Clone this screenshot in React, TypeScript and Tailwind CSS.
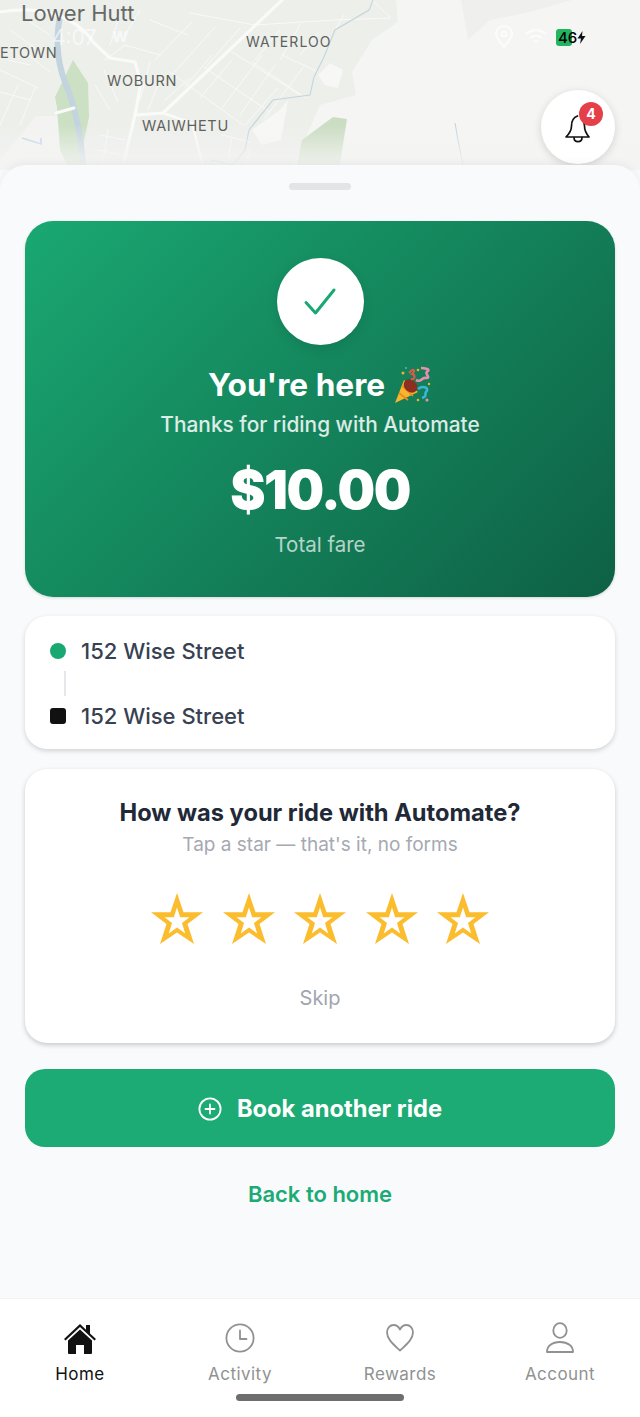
import React from "react";

const Star = () => (
  <svg width="52" height="52" viewBox="0 0 52 52" className="block">
    <path
      fillRule="evenodd"
      fill="#fbbc2d"
      d="M26 0 L32.5 19.3 L52 19.3 L36.5 31 L43 51 L26 39.5 L9 51 L15.5 31 L0 19.3 L19.5 19.3 Z M26 14.5 L22.8 24.3 L13.5 24.3 L21 30 L17.8 40.5 L26 34.5 L34.2 40.5 L31 30 L38.5 24.3 L29.2 24.3 Z"
    />
  </svg>
);

const Popper = () => (
  <svg width="38" height="38" viewBox="0 0 38 38" fill="none" className="shrink-0">
    <path d="M1 37 L10 14 L24 26 Z" fill="#f9b52b" />
    <path d="M5 27 L14 34 M8 20 L19 30" stroke="#ef8a1f" strokeWidth="1.6" />
    <ellipse cx="16.5" cy="20" rx="7.5" ry="6" fill="#8c2f22" transform="rotate(40 16.5 20)" />
    <path d="M22 14 C28 17 27 11 32 12 C38 12 29 7 34 5 C36 3 30 2 27 2" stroke="#e88fb0" strokeWidth="2.6" fill="none" />
    <path d="M24 23 C29 19 36 22 32 26 C30 29 34 30 28 32" stroke="#3bb6d8" strokeWidth="2.6" fill="none" />
    <path d="M15 7 C20 1 22 5 18 8 C22 9 21 14 17 13" stroke="#e4574a" strokeWidth="2" fill="none" />
    <circle cx="9" cy="7" r="1.5" fill="#f1b12c" /><circle cx="24" cy="4" r="1.3" fill="#f1b12c" /><circle cx="12" cy="2" r="1.1" fill="#3bb6d8" />
    <circle cx="33" cy="34" r="1.6" fill="#e88fb0" /><circle cx="24" cy="34" r="1.3" fill="#f1b12c" /><circle cx="35" cy="18" r="1.2" fill="#f1b12c" />
  </svg>
);

const MapArt = () => (
  <svg width="640" height="170" viewBox="0 0 640 170" fill="none" className="block">
    <rect width="640" height="170" fill="#f5f6f4" />
    <path d="M0 0 H396 L398 22 L372 40 L352 72 L356 95 L320 105 L296 160 L290 170 H0 Z" fill="#edefeb" />
    <path d="M461 0 H572 L530 12 L490 20 L468 40 Z" fill="#eff0ee" />
    <path d="M330 63 L343 70 L338 88 L325 85 L318 75 Z" fill="#f7f8f6" />
    <path d="M252 130 L280 110 L288 100 L281 140 L262 145 Z" fill="#f7f8f6" />
    <path d="M36 116 L57 116 L70 170 H0 V160 Z" fill="#f3f4f2" />
    <path d="M333 117 L347 119 L339 170 H296 L302 140 Z" fill="#cbddc3" />
    <path d="M55 97 L73 60 L88 83 L89 117 L80 160 L84 170 H70 L60 150 L57 107 Z" fill="#cce0c4" />
    <path d="M60 16 C56 36 56 60 66 85 C75 105 80 130 84 170" stroke="#c4d4df" strokeWidth="6" />
    <g stroke="#fafaf9" strokeLinecap="round" strokeLinejoin="round">
      <path d="M282 0 L163 113 L135 115 L122 170" strokeWidth="3.2" />
      <path d="M0 12 C40 5 75 15 94 43 L110 58 L135 62 L141 83 L135 115" strokeWidth="3.2" />
      <path d="M163 113 L192 123 L204 170" strokeWidth="2.4" />
      <path d="M56 113 L74 108" strokeWidth="3" />
      <path d="M190 13 L255 25 L335 20 L390 18 M192 22 L155 60 M215 27 L175 72 M240 28 L205 68 M280 30 L255 60 M300 25 L280 60 M318 33 L300 55 M344 15 L335 30 M372 0 L390 17" strokeWidth="0.9" />
      <path d="M170 72 L243 125 M205 68 L270 112 M232 52 L300 95 M252 62 L306 98 M282 55 L318 72 M240 115 L275 65 M222 108 L262 55 M200 98 L232 60 M185 87 L212 55 M265 118 L305 65 M165 100 L190 78 M245 125 L278 88" strokeWidth="0.9" />
      <path d="M125 45 L160 55 M150 20 L188 35 M150 62 L140 100 M160 80 L148 110 M105 60 L125 45 M120 15 L110 45 M140 10 L125 35" strokeWidth="0.9" />
      <path d="M0 70 L38 88 M0 92 L30 100 M35 88 L20 125 M18 85 L0 125 M8 60 L30 65 M28 55 L50 72 M30 22 L50 35 M10 30 L35 48 M104 70 L118 102 M95 85 L110 110" strokeWidth="0.9" />
      <path d="M100 135 L125 140 M98 150 L122 155 M108 130 L102 170 M222 135 L250 142 M232 138 L226 170 M250 150 L244 170" strokeWidth="0.9" />
    </g>
    <path d="M373 0 L369 10 L335 30 L324 57 L314 77 L310 95 L273 100 L249 130 L245 150 L233 165 L212 160 L212 170" stroke="#c3d5db" strokeWidth="1.1" />
    <path d="M455 123 L458 140 L463 165" stroke="#c3d5db" strokeWidth="1.1" />
    <path d="M22 138 L41 144 L41 138" stroke="#bcd4e6" strokeWidth="1.6" />
  </svg>
);

const Bell = () => (
  <svg width="32" height="32" viewBox="0 0 32 32" fill="none" stroke="#111" strokeWidth="1.7" strokeLinecap="round" strokeLinejoin="round">
    <path d="M15.5 4 C10 6 9.5 10 9.5 14 C9.5 19 7 22 4 25 H27 C24.5 22 22.5 19.5 22.5 14 C22.5 12 22 10 21 8.5" />
    <path d="M12 25.5 C12 31 20 31 20 25.5" />
  </svg>
);

const NavItem = ({ label, active, children }: { label: string; active?: boolean; children: React.ReactNode }) => (
  <div className="flex flex-1 flex-col items-center">
    <div className="flex h-[36px] items-center justify-center">{children}</div>
    <span className={`mt-[7px] text-[17px] leading-[22px] tracking-[0.45px] ${active ? "text-[#111]" : "text-[#8f9291]"}`}>{label}</span>
  </div>
);

export default function App() {
  return (
    <div className="relative h-[1417px] w-[640px] overflow-hidden bg-[#f8fafc] font-['Inter',sans-serif]">
      <div className="absolute inset-x-0 top-0 h-[170px]">
        <MapArt />
        <div className="absolute inset-x-0 top-[125px] h-[45px] bg-gradient-to-b from-transparent to-[#f4f4f3]" />
        <span className="absolute left-[21px] top-0 text-[22px] leading-[26px] text-[#666a66]">Lower Hutt</span>
        <span className="absolute left-0 top-[44px] text-[14.5px] leading-[18px] tracking-[0.7px] text-[#5d625d]">ETOWN</span>
        <span className="absolute left-[246px] top-[33px] text-[14px] leading-[18px] tracking-[1.1px] text-[#5d625d]">WATERLOO</span>
        <span className="absolute left-[107px] top-[72px] text-[14.5px] leading-[18px] tracking-[0.7px] text-[#5d625d]">WOBURN</span>
        <span className="absolute left-[142px] top-[117px] text-[14.5px] leading-[18px] tracking-[0.7px] text-[#5d625d]">WAIWHETU</span>
        <span className="absolute left-[52px] top-[25px] text-[21px] leading-[26px] text-white/60">4:07</span>
        <span className="absolute left-[112px] top-[25px] text-[19px] font-bold leading-[22px] text-white/60">w</span>
        <svg className="absolute left-[494px] top-[25px]" width="20" height="24" viewBox="0 0 20 24" fill="none" stroke="#fff" strokeOpacity="0.7" strokeWidth="2">
          <path d="M10 22 C5 16 2 12 2 9 A8 8 0 0 1 18 9 C18 12 15 16 10 22 Z" />
          <circle cx="10" cy="9" r="2.5" />
        </svg>
        <svg className="absolute left-[524px] top-[28px]" width="24" height="18" viewBox="0 0 24 18" fill="none" stroke="#fff" strokeOpacity="0.7" strokeWidth="2">
          <path d="M2 6 C8 1 16 1 22 6 M6 10 C10 7 14 7 18 10 M10 14 C11 13 13 13 14 14" />
        </svg>
        <div className="absolute left-[556px] top-[29px] h-[17px] w-[16px] rounded-[3px] bg-[#22b45e]" />
        <span className="absolute left-[558px] top-[28px] text-[15px] font-medium leading-[19px] text-black">46</span>
        <svg className="absolute left-[577px] top-[31px]" width="9" height="13" viewBox="0 0 9 13"><path d="M5.5 0 L0.5 7.5 H4 L3 13 L8.5 5 H5 Z" fill="#111" /></svg>
        <div className="absolute left-[541px] top-[90px] flex h-[74px] w-[74px] items-center justify-center rounded-full bg-white shadow-[0_2px_8px_rgba(0,0,0,0.14)]">
          <div className="mt-[2px]"><Bell /></div>
          <div className="absolute left-[38px] top-[12px] flex h-[24px] w-[24px] items-center justify-center rounded-full bg-[#e5404a] text-[14px] font-bold leading-none text-white">4</div>
        </div>
      </div>

      <div className="absolute inset-x-0 bottom-0 top-[165px] flex flex-col">
        <main className="flex flex-1 flex-col rounded-t-[26px] bg-[#f8fafc] px-[25px] shadow-[0_-2px_8px_rgba(0,0,0,0.05)]">
          <div className="mx-auto mt-[18px] h-[7px] w-[62px] rounded-full bg-[#e2e5e8]" />
          <section className="mt-[31px] flex h-[376px] flex-col items-center rounded-[28px] bg-[linear-gradient(135deg,#1aa872,#0e6045)] pt-[37px] shadow-[0_1px_3px_rgba(0,0,0,0.15)]">
            <div className="flex h-[87px] w-[87px] items-center justify-center rounded-full bg-white shadow-[0_4px_12px_rgba(0,0,0,0.1)]">
              <svg width="38" height="38" viewBox="0 0 38 38" fill="none" stroke="#1aa872" strokeWidth="3" strokeLinecap="round" strokeLinejoin="round">
                <path d="M5 19.5 L14.5 30 L33 7" />
              </svg>
            </div>
            <div className="mt-[19px] flex h-[42px] items-center gap-[9px] text-[31.6px] font-bold leading-[42px] text-white">
              <span>You're here</span>
              <Popper />
            </div>
            <p className="mt-[4px] text-[20.85px] font-medium leading-[30px] text-white/85">Thanks for riding with Automate</p>
            <p className="mt-[18px] text-[53px] font-black leading-[64px] tracking-[-1.5px] text-white">$10.00</p>
            <p className="mt-[8px] text-[20.5px] leading-[30px] text-white/70">Total fare</p>
          </section>

          <section className="mt-[19px] h-[133px] rounded-[22px] bg-white pl-[25px] pt-[20px] shadow-[0_2px_5px_rgba(0,0,0,0.16)]">
            <div className="flex h-[30px] items-center gap-[15px]">
              <span className="h-[16px] w-[16px] rounded-full bg-[#1aa872]" />
              <span className="text-[22px] font-medium leading-[30px] text-[#374151]">152 Wise Street</span>
            </div>
            <div className="ml-[14px] mt-[5px] h-[25px] w-[2px] bg-[#e5e7eb]" />
            <div className="mt-[5px] flex h-[30px] items-center gap-[15px]">
              <span className="h-[16px] w-[16px] rounded-[3px] bg-[#111]" />
              <span className="text-[22px] font-medium leading-[30px] text-[#374151]">152 Wise Street</span>
            </div>
          </section>

          <section className="mt-[20px] flex h-[274px] flex-col items-center rounded-[22px] bg-white pt-[27px] shadow-[0_2px_5px_rgba(0,0,0,0.2)]">
            <h2 className="text-[23.65px] font-bold leading-[34px] text-[#1f2937]">How was your ride with Automate?</h2>
            <p className="text-[19px] leading-[30px] text-[#a5a9b2]">Tap a star — that's it, no forms</p>
            <div className="mt-[33px] flex gap-[19.5px]"><Star /><Star /><Star /><Star /><Star /></div>
            <p className="mt-[38px] text-[20px] leading-[30px] text-[#a1a5ae]">Skip</p>
          </section>

          <button className="mt-[26px] flex h-[78px] shrink-0 items-center justify-center gap-[15px] rounded-[20px] bg-[#1cab74] pt-[1px] text-[23.7px] font-bold text-white">
            <svg width="24" height="24" viewBox="0 0 24 24" fill="none" stroke="#fff" strokeWidth="1.8" strokeLinecap="round">
              <circle cx="12" cy="12" r="10.6" /><path d="M12 7.5 V16.5 M7.5 12 H16.5" />
            </svg>
            Book another ride
          </button>
          <p className="mt-[32px] text-center text-[22px] font-semibold leading-[30px] text-[#1cab74]">Back to home</p>
        </main>

        <nav className="relative flex h-[119px] shrink-0 border-t border-[#f1f3f5] bg-white pt-[21px]">
          <NavItem label="Home" active>
            <svg width="34" height="34" viewBox="0 0 34 34" fill="#111">
              <path d="M17 3 L1 18 L2.5 19.5 L17 6 L31.5 19.5 L33 18 L27 12.5 V4 H23 V8.7 Z" />
              <path d="M17 8.5 L5 19.5 V32 A1 1 0 0 0 6 33 H13 V24 H21 V33 H28 A1 1 0 0 0 29 32 V19.5 Z" />
            </svg>
          </NavItem>
          <NavItem label="Activity">
            <svg width="30" height="30" viewBox="0 0 30 30" fill="none" stroke="#8f9291" strokeWidth="1.8" strokeLinecap="round" strokeLinejoin="round">
              <circle cx="15" cy="15" r="13.6" /><path d="M15 7.5 V16 H21.5" />
            </svg>
          </NavItem>
          <NavItem label="Rewards">
            <svg width="30" height="30" viewBox="0 0 30 30" fill="none" stroke="#8f9291" strokeWidth="1.8" strokeLinejoin="round">
              <path d="M15 27.5 C8 21 2 16 2 9.5 C2 5 5 2 8.5 2 C11 2 13.5 3.5 15 6.5 C16.5 3.5 19 2 21.5 2 C25 2 28 5 28 9.5 C28 16 22 21 15 27.5 Z" />
            </svg>
          </NavItem>
          <NavItem label="Account">
            <svg width="30" height="32" viewBox="0 0 30 32" fill="none" stroke="#8f9291" strokeWidth="1.8" strokeLinejoin="round">
              <ellipse cx="15" cy="8.5" rx="6.7" ry="7.3" />
              <path d="M2 30 C2 24 7 20 15 20 C23 20 28 24 28 30 Z" />
            </svg>
          </NavItem>
          <div className="absolute bottom-[16px] left-[236px] h-[7px] w-[168px] rounded-full bg-[#6e6e6e]" />
        </nav>
      </div>
    </div>
  );
}
